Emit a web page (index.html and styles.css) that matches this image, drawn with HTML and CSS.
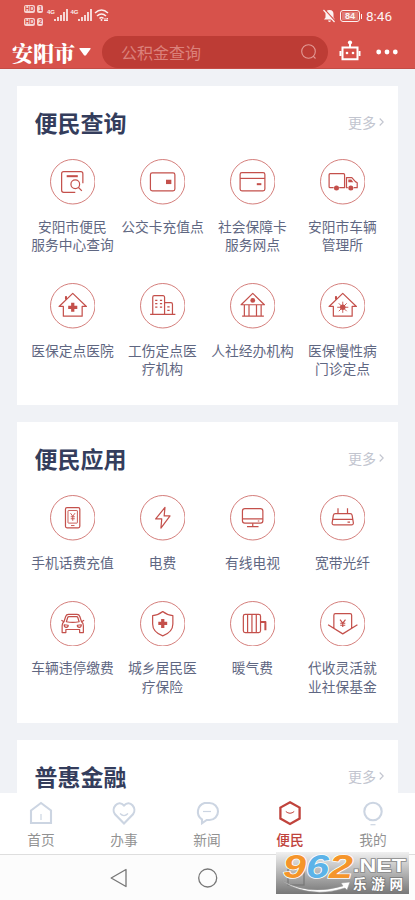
FILE: index.html
```html
<!DOCTYPE html>
<html lang="zh-CN">
<head>
<meta charset="utf-8">
<meta name="viewport" content="width=device-width, initial-scale=1">
<title>便民</title>
<link rel="stylesheet" href="styles.css">
</head>
<body>
<div class="phone">
  <header class="header">
    <div class="status">
      <div class="status-left">
        <div class="hd-stack">
          <div class="hd"><b>HD</b><b>1</b></div>
          <div class="hd"><b>HD</b><b>2</b></div>
        </div>
        <div class="signal"><span>4G</span><svg width="14" height="14" viewBox="0 0 14 14"><path d="M1 13v-2M4 13V9M7 13V7M10 13V4M13 13V1"/></svg></div>
        <div class="signal"><span>4G</span><svg width="14" height="14" viewBox="0 0 14 14"><path d="M1 13v-2M4 13V9M7 13V7M10 13V4M13 13V1"/></svg></div>
        <svg class="wifi" width="16" height="14" viewBox="0 0 16 14"><path d="M1 5q6.500-6 13 0M3 8q4.500-4 9 0M5.500 10.500q2-2 4 0"/><circle cx="7.500" cy="12" r="1"/><path class="arrows" d="M10 11h4l-1-1M14 12.500h-4"/></svg>
      </div>
      <div class="status-right">
        <svg class="bell" width="13" height="14" viewBox="0 0 13 14"><path class="fill" d="M6.500 1c-3 0-4 2-4 4v3.500L1 10.500h11l-1.500-2V5c0-2-1-4-4-4zM5 11.500h3q-.500 1.500-1.500 1.500T5 11.500z"/><path class="gap" d="M1.500.5l11 12"/><path class="bar" d="M.5 1l11 12"/></svg>
        <div class="battery"><span>84</span></div>
        <span class="time">8:46</span>
      </div>
    </div>
    <div class="nav">
      <span class="city">安阳市</span>
      <svg class="caret" width="12" height="8" viewBox="0 0 12 8"><path d="M1 0h10q1 .3.500 1L7 7.300q-1 .8-2 0L.5 1Q0 .3 1 0z"/></svg>
      <div class="search">
        <span>公积金查询</span>
        <svg width="16" height="16" viewBox="0 0 16 16"><circle cx="7.500" cy="7.500" r="6.800"/><path d="M12.200 12.200l2.300 2.300"/></svg>
      </div>
      <svg class="robot" width="22" height="22" viewBox="0 0 22 22"><path d="M3.500 7.500h15v11.700h-15zM11 7V2.500" fill="none" stroke="#fff" stroke-width="2"/><circle cx="11" cy="2.500" r="2.100"/><path d="M.5 11h2v5h-2zM19.500 11h2v5h-2z"/><circle cx="8" cy="13" r="1.300"/><circle cx="14" cy="13" r="1.300"/></svg>
      <svg class="dots" width="22" height="6" viewBox="0 0 22 6"><circle cx="2.700" cy="3" r="2.400"/><circle cx="11" cy="3" r="2.400"/><circle cx="19.300" cy="3" r="2.400"/></svg>
    </div>
  </header>

  <main class="content">
    <section class="card">
      <div class="card-head"><h2>便民查询</h2><a class="more">更多<svg width="5" height="8" viewBox="0 0 5 8"><path d="M.7.5L4.200 4 .7 7.500"/></svg></a></div>
      <div class="grid">
        <div class="item"><svg class="icon" viewBox="0 0 45 45"><circle class="ring" cx="22.500" cy="22.500" r="22"/><path d="M25 33H13.500a2 2 0 0 1-2-2V14.500a2 2 0 0 1 2-2h17a2 2 0 0 1 2 2V24"/><circle cx="25" cy="25" r="4.300"/><path d="M28.200 28.200l3.300 3.300"/><path class="thick" d="M16.500 17h11"/></svg><span>安阳市便民<br>服务中心查询</span></div>
        <div class="item"><svg class="icon" viewBox="0 0 45 45"><circle class="ring" cx="22.500" cy="22.500" r="22"/><rect x="10.300" y="13.700" width="24.200" height="17.800" rx="1.800"/><path class="solid" d="M25.700 20.500H31v4.300h-5.300z"/></svg><span>公交卡充值点</span></div>
        <div class="item"><svg class="icon" viewBox="0 0 45 45"><circle class="ring" cx="22.500" cy="22.500" r="22"/><rect x="10" y="13.500" width="24.500" height="18" rx="1.800"/><path d="M10 19.200h24.500"/><path class="thick" d="M26.500 24.900H31"/></svg><span>社会保障卡<br>服务网点</span></div>
        <div class="item"><svg class="icon" viewBox="0 0 45 45"><circle class="ring" cx="22.500" cy="22.500" r="22"/><path d="M13.500 28.400H10a1 1 0 0 1-1-1V15.500a1 1 0 0 1 1-1h13.300a1 1 0 0 1 1 1v12.900H19M27.500 28.400h-1.300v-10h5.300l3.500 4 1.800 1v5h-3.500"/><circle class="solid" cx="16.300" cy="28.700" r="2.500"/><circle class="solid" cx="30.500" cy="28.700" r="2.500"/><path class="solid" d="M28 20.300h3l2 2.700h-5z"/></svg><span>安阳市车辆<br>管理所</span></div>
        <div class="item"><svg class="icon" viewBox="0 0 45 45"><circle class="ring" cx="22.500" cy="22.500" r="22"/><path d="M13.200 23.200H9L22.500 10.200 36 23.200h-4.200v9.600H13.200z"/><path class="thick" d="M15.800 13v3.500"/><path class="cross" d="M22.500 19.500v9M18 24h9"/></svg><span>医保定点医院</span></div>
        <div class="item"><svg class="icon" viewBox="0 0 45 45"><circle class="ring" cx="22.500" cy="22.500" r="22"/><path d="M10 31h25M12.600 31V14a1.500 1.500 0 0 1 1.500-1.500h8.700a1.500 1.500 0 0 1 1.500 1.500v17M24.300 19.500h6.300a1.500 1.500 0 0 1 1.500 1.500v10M15 17.200h2.200M19.700 17.200h2.200M15 20.500h2.200M19.700 20.500h2.200M15 23.800h2.200M19.700 23.800h2.200M27 23.700h2.300M27 27h2.300"/></svg><span>工伤定点医<br>疗机构</span></div>
        <div class="item"><svg class="icon" viewBox="0 0 45 45"><circle class="ring" cx="22.500" cy="22.500" r="22"/><path d="M11 21.500L22.500 10.200 34 21.500zM12 32.800h21.500M14.200 22v10.500M18.800 22v10.500M26.200 22v10.500M30.800 22v10.500"/><circle class="solid" cx="22.500" cy="17.200" r="2.400"/></svg><span>人社经办机构</span></div>
        <div class="item"><svg class="icon" viewBox="0 0 45 45"><circle class="ring" cx="22.500" cy="22.500" r="22"/><path d="M13.200 23.200H9L22.500 10.200 36 23.200h-4.200v9.600H13.200z"/><path class="thick" d="M15.800 13v3.500"/><circle class="solid" cx="22.500" cy="24" r="2.700"/><path class="fine" d="M22.500 18.500v11M17 24h11M18.600 20.100l7.800 7.800M26.400 20.100l-7.800 7.800"/></svg><span>医保慢性病<br>门诊定点</span></div>
      </div>
    </section>

    <section class="card">
      <div class="card-head"><h2>便民应用</h2><a class="more">更多<svg width="5" height="8" viewBox="0 0 5 8"><path d="M.7.5L4.200 4 .7 7.500"/></svg></a></div>
      <div class="grid">
        <div class="item"><svg class="icon" viewBox="0 0 45 45"><circle class="ring" cx="22.500" cy="22.500" r="22"/><rect x="15.300" y="12.500" width="14.200" height="20" rx="1.500"/><rect class="fine" x="17.800" y="15.300" width="9.300" height="12.500" rx=".5"/><path d="M20.800 30.200h3.400M20.300 18l2.200 3 2.200-3M22.500 21v4.500M20.500 21.500h4M20.500 23.500h4" class="fine"/></svg><span>手机话费充值</span></div>
        <div class="item"><svg class="icon" viewBox="0 0 45 45"><circle class="ring" cx="22.500" cy="22.500" r="22"/><path d="M24.700 12.300L15.500 23.700h6L20.700 32.700l9-12h-5.800z"/></svg><span>电费</span></div>
        <div class="item"><svg class="icon" viewBox="0 0 45 45"><circle class="ring" cx="22.500" cy="22.500" r="22"/><rect x="12.300" y="13.500" width="20.200" height="14.300" rx="2.300"/><path d="M12.300 23.600h20.200M27.500 25.700h1.500M22.500 28v3M16.800 31.200h11.400"/></svg><span>有线电视</span></div>
        <div class="item"><svg class="icon" viewBox="0 0 45 45"><circle class="ring" cx="22.500" cy="22.500" r="22"/><path d="M17.800 13v5.300M27.200 13v5.300M15.200 18.500h14.600a2 2 0 0 1 2 1.600l1.200 7.500a1.800 1.800 0 0 1-1.800 2H13.800a1.800 1.800 0 0 1-1.800-2l1.200-7.500a2 2 0 0 1 2-1.600zM12.500 24.200h20M27.200 26.800h2.500"/></svg><span>宽带光纤</span></div>
        <div class="item"><svg class="icon" viewBox="0 0 45 45"><circle class="ring" cx="22.500" cy="22.500" r="22"/><path d="M13.800 20.500l1.700-5.200q.7-2 2.800-2h8.400q2.100 0 2.800 2l1.700 5.200q1.800 1.200 1.800 4v6.700h-3.700v-3H15.700v3H12v-6.700q0-2.800 1.800-4zM16.200 20.500l1.300-4.200q.3-.8 1.200-.8h7.600q.9 0 1.200.8l1.300 4.200q-6.300 1.200-12.600 0zM11.300 19l2 1.300M33.700 19l-2 1.300M14 23.500l4 .5q0 2-2 2t-2-2.500zM31 23.500l-4 .5q0 2 2 2t2-2.500z"/></svg><span>车辆违停缴费</span></div>
        <div class="item"><svg class="icon" viewBox="0 0 45 45"><circle class="ring" cx="22.500" cy="22.500" r="22"/><path d="M22.500 10.400q4.500 3.600 10 4v8.400q0 8-10 11.700-10-3.700-10-11.700v-8.400q5.500-.4 10-4z"/><path class="cross" d="M22.500 17.800v8.800M18.100 22.200h8.800"/></svg><span>城乡居民医<br>疗保险</span></div>
        <div class="item"><svg class="icon" viewBox="0 0 45 45"><circle class="ring" cx="22.500" cy="22.500" r="22"/><rect x="13.200" y="13.300" width="17" height="18" rx="1.800"/><path d="M17.400 13.500v17.800M21.700 13.500v17.800M26 13.500v17.800"/><path class="thick" d="M30.200 20.800H35V29"/></svg><span>暖气费</span></div>
        <div class="item"><svg class="icon" viewBox="0 0 45 45"><circle class="ring" cx="22.500" cy="22.500" r="22"/><path d="M13.700 27V14a1.500 1.500 0 0 1 1.500-1.500h14.600a1.500 1.500 0 0 1 1.500 1.500v13M8 23.500l14.500 9 14.500-9M19.800 18.500l2.700 3.300 2.700-3.300M22.500 21.800v4M20 22h5M20 24h5"/></svg><span>代收灵活就<br>业社保基金</span></div>
      </div>
    </section>

    <section class="card">
      <div class="card-head"><h2>普惠金融</h2><a class="more">更多<svg width="5" height="8" viewBox="0 0 5 8"><path d="M.7.5L4.200 4 .7 7.500"/></svg></a></div>
    </section>
  </main>

  <nav class="tabs">
    <div class="tab"><svg viewBox="0 0 26 26"><path d="M3 10.500L13 3l10 7.500V23H3z"/><path class="thin" d="M13 14v6"/></svg><span>首页</span></div>
    <div class="tab"><svg viewBox="0 0 26 26"><path d="M13 23.500L4 14.300C-.5 8.500 7-1 13 5.500c6-6.500 13.500 3 9 8.800z"/><path class="thin" d="M9 13.500q4 4 8 0"/></svg><span>办事</span></div>
    <div class="tab"><svg viewBox="0 0 26 26"><path d="M8 23.300v-3.800A9.200 9.200 0 0 1 10.500 3h5a8.300 8.300 0 0 1 0 17h-2.800z"/><path class="thin" d="M9 11.500h8"/></svg><span>新闻</span></div>
    <div class="tab active"><svg viewBox="0 0 26 26"><path d="M13 2.300l9.600 5.300v11L13 24l-9.600-5.400v-11z"/><path class="thin" d="M8.800 11.500q4.200 3.500 8.400 0"/></svg><span>便民</span></div>
    <div class="tab"><svg viewBox="0 0 26 26"><circle cx="13" cy="11.500" r="8.700"/><path class="thin" d="M10.500 24.700h5"/></svg><span>我的</span></div>
  </nav>

  <footer class="system">
    <svg width="20" height="20" viewBox="0 0 20 20"><path d="M16 1.500v17L1.200 10z"/></svg>
    <svg width="20" height="20" viewBox="0 0 20 20"><circle cx="9.700" cy="10" r="9"/></svg>
    <svg width="20" height="20" viewBox="0 0 20 20"><rect x="2" y="2" width="16" height="16" rx="1"/></svg>
  </footer>

  <svg class="watermark" width="133" height="42" viewBox="0 0 133 42">
    <defs><linearGradient id="shade" x2="0" y2="1"><stop offset="0" stop-color="#f0f0f0"/><stop offset=".5" stop-color="#b4b4b4"/><stop offset="1" stop-color="#777"/></linearGradient></defs>
    <rect width="133" height="42" fill="url(#shade)"/>
    <rect x="12" y="17" width="16" height="16" fill="none" stroke="#777" stroke-width="1.200"/>
    <path class="swoosh" d="M6 29Q34 44 67 34l-2-3 9-1-3 8-2-2Q34 47 6 29z"/>
    <g class="digits"><text x="7" y="25.500" textLength="23" lengthAdjust="spacingAndGlyphs">9</text><text class="blue" x="30" y="25.500" textLength="23" lengthAdjust="spacingAndGlyphs">6</text><text x="53" y="25.500" textLength="24" lengthAdjust="spacingAndGlyphs">2</text></g>
    <text class="net" x="77" y="19.500" textLength="53" lengthAdjust="spacingAndGlyphs">.NET</text>
    <text class="site" x="77" y="37" textLength="50">乐游网</text>
  </svg>
</div>
</body>
</html>
```

FILE: styles.css
```css
* { box-sizing: border-box; }
body {
  margin: 0;
  background: #f0f2f6;
  font-family: "Noto Sans CJK SC", sans-serif;
}
svg { display: block; flex: none; }
.phone {
  position: relative;
  display: flex;
  flex-direction: column;
  width: 415px;
  height: 900px;
  overflow: hidden;
}

/* Header */
.header { height: 69px; flex: none; background: #d7524b; border-bottom: 1px solid #c44c45; color: #fff; }
.status { display: flex; justify-content: space-between; height: 36px; padding: 4px 23px 0 24px; }
.status-left { display: flex; align-items: flex-start; opacity: .9; }
.hd-stack { display: flex; flex-direction: column; gap: 5px; width: 23px; padding-top: 1px; }
.hd { display: flex; gap: 2px; }
.hd b {
  padding: 0 1px;
  height: 8px;
  border-radius: 2px;
  background: #fbe3e1;
  color: #d7524b;
  font: bold 6.5px/8px "Liberation Sans", sans-serif;
}
.signal { display: flex; width: 23.5px; padding-top: 4px; }
.signal span { width: 7px; font: bold 6px/8px "Liberation Sans", sans-serif; }
.signal path { stroke: #fff; stroke-width: 1.7; }
.wifi { margin-top: 4px; fill: #fff; }
.wifi path { fill: none; stroke: #fff; stroke-width: 1.6; }
.wifi .arrows { stroke-width: 1; }
.status-right { display: flex; align-items: center; height: 24px; opacity: .93; }
.bell .fill { fill: #fff; }
.bell .gap { stroke: #d7524b; stroke-width: 1.5; }
.bell .bar { stroke: #fff; stroke-width: 1.2; }
.battery {
  position: relative;
  width: 20px;
  height: 12px;
  margin: 0 6px 0 4px;
  padding: 1px;
  border: 1px solid #fff;
  border-radius: 3px;
}
.battery::after { content: ""; position: absolute; right: -3px; top: 3px; width: 1px; height: 5px; background: #fff; }
.battery span { display: block; background: #e07f79; text-align: center; font: bold 9px/8px "Liberation Sans", sans-serif; }
.time { font: 13.5px/18px Roboto, sans-serif; }
.nav { display: flex; align-items: center; height: 32px; padding-left: 12px; }
.city { width: 63px; font: 900 21px/30px "Noto Serif CJK SC", "Noto Sans CJK SC", serif; white-space: nowrap; }
.caret { margin: 0 11px 0 4px; fill: #fff; }
.search {
  display: flex;
  align-items: center;
  justify-content: space-between;
  width: 226px;
  height: 32px;
  padding: 0 11px 0 19px;
  border-radius: 16px;
  background: #bd3c35;
  color: #db817b;
  font-size: 16px;
}
.search svg { fill: none; stroke: #e39a95; stroke-width: 1.1; }
.robot { margin: -3px 15px 0 11px; fill: #fff; }
.dots { fill: #fff; }

/* Cards */
.content { flex: 1; min-height: 0; overflow: hidden; padding: 17px 17px 0; }
.card { margin-bottom: 17.5px; padding-bottom: 26.4px; background: #fff; }
.card-head {
  display: flex;
  align-items: center;
  justify-content: space-between;
  height: 73px;
  padding: 0 14px 2px 17.5px;
}
h2 { margin: 0; color: #343d5c; font-size: 23px; font-weight: 700; line-height: 34px; }
.more { display: flex; align-items: center; gap: 3px; color: #c2c5cf; font-size: 14px; line-height: 20px; }
.more svg { fill: none; stroke: #c2c5cf; stroke-width: 1.1; }
.grid { display: grid; grid-template-columns: repeat(4, 90px); row-gap: 28.5px; padding-left: 10.5px; }
.item { display: flex; flex-direction: column; align-items: center; gap: 12px; padding-bottom: 1px; }
.item span { color: #5f6782; font-size: 13.75px; line-height: 18.5px; text-align: center; white-space: nowrap; }
.icon { width: 45.5px; height: 45.5px; fill: none; stroke: #c4504b; stroke-width: 1.2; stroke-linejoin: round; }
.icon .ring { stroke: #cf716d; stroke-width: .9; }
.icon .thick { stroke-width: 2; }
.icon .cross { stroke-width: 3.2; }
.icon .fine { stroke-width: .9; }
.icon .solid { fill: #c4504b; stroke: none; }

/* Bottom tabs */
.tabs { display: grid; grid-template-columns: repeat(5, 83px); flex: none; height: 61px; background: #fff; }
.tab { display: flex; flex-direction: column; align-items: center; padding: 7px 1px 0 0; color: #929292; font-size: 13.7px; line-height: 20px; }
.tab svg { width: 26px; height: 26px; margin-bottom: 3px; fill: none; stroke: #ccd5e2; stroke-width: 2.1; }
.tab .thin { stroke-width: 1.2; }
.tab.active { color: #c0433c; font-weight: 500; }
.tab.active svg { stroke: #c0433c; stroke-width: 2.3; }
.tab.active .thin { stroke-width: 1; }

/* System navigation */
.system {
  display: flex;
  justify-content: center;
  gap: 68px;
  flex: none;
  height: 46px;
  padding-top: 13px;
  border-top: 1.5px solid #dedede;
  background: #fcfcfc;
}
.system svg { fill: none; stroke: #777; stroke-width: 1.3; stroke-linejoin: round; }

/* Site mark over the corner */
.watermark { position: absolute; left: 276px; top: 852px; overflow: visible; }
.digits text {
  fill: #f5952b;
  stroke: #fff;
  stroke-width: 1.5;
  paint-order: stroke;
  font: italic bold 33px "Liberation Sans", sans-serif;
}
.digits .blue { fill: #5cb3e8; }
.net { fill: #fff; stroke: #888; stroke-width: 1.5; paint-order: stroke; font: bold 18px "Liberation Sans", sans-serif; }
.site { fill: #fff; stroke: #777; stroke-width: 1.5; paint-order: stroke; font: bold 13.5px "Noto Sans CJK SC", sans-serif; }
.swoosh { fill: #fff; stroke: #999; stroke-width: .5; }
```
